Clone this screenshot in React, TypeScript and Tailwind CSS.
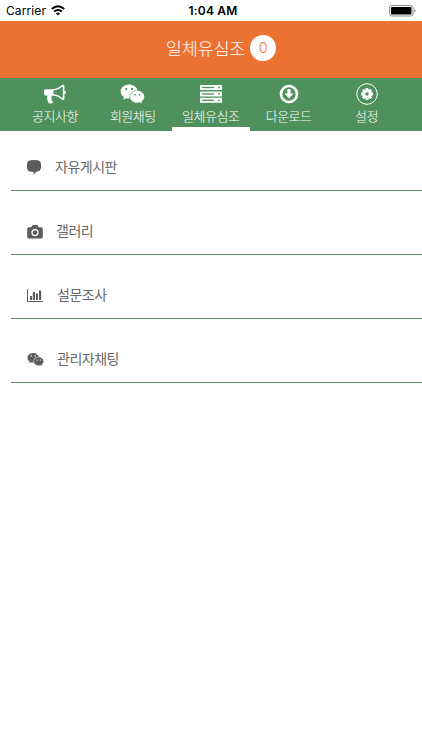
import type { ReactNode } from "react";
import { FaWeixin } from "react-icons/fa";

function MegaphoneIcon() {
  return (
    <svg viewBox="0 0 1792 1792" className="w-[22px] h-[22px]" fill="currentColor">
      <path d="M1664 640q53 0 90.5 37.5t37.5 90.5-37.5 90.5-90.5 37.5v384q0 52-38 90t-90 38q-417-347-812-380-58 19-91 66t-31 100.5 40 92.5q-20 33-23 65.5t6 58 33.5 55 48 50 61.5 50.5q-29 58-111.5 83t-168.5 11.5-132-55.5q-7-23-29.5-87.5t-32-94.5-23-89-15-101 3.5-98.5 22-110.5h-122q-66 0-113-47t-47-113v-192q0-66 47-113t113-47h480q435 0 896-384 52 0 90 38t38 90v384zm-128 604v-954q-394 302-768 343v270q377 42 768 341z" />
    </svg>
  );
}

function ServerIcon() {
  return (
    <svg viewBox="0 0 22 18" className="w-[22px] h-[18px]">
      {[0, 6.4, 12.8].map((y) => (
        <g key={y}>
          <rect x="0" y={y} width="22" height="5" rx="0.4" fill="white" />
          <rect x="2" y={y + 1.9} width="12" height="1.3" fill="#4f915c" />
          <circle cx="19" cy={y + 2.5} r="0.9" fill="#4f915c" />
        </g>
      ))}
    </svg>
  );
}

function DownloadIcon() {
  return (
    <svg viewBox="0 0 20 20" className="w-5 h-5">
      <circle cx="10" cy="10" r="8" fill="none" stroke="currentColor" strokeWidth="2.7" />
      <path d="M8.4 5h3.2v4.6h2.9L10 14.5 5.5 9.6h2.9z" fill="currentColor" />
    </svg>
  );
}

function SettingsIcon() {
  return (
    <svg viewBox="0 0 22 22" className="w-[22px] h-[22px]">
      <circle cx="11" cy="11" r="10.3" fill="none" stroke="currentColor" strokeWidth="1" />
      <circle cx="11" cy="11" r="3.3" fill="none" stroke="currentColor" strokeWidth="3" />
      {[0, 45, 90, 135, 180, 225, 270, 315].map((angle) => (
        <rect
          key={angle}
          x="9.6"
          y="5"
          width="2.8"
          height="2.5"
          rx="0.5"
          fill="currentColor"
          transform={`rotate(${angle} 11 11)`}
        />
      ))}
    </svg>
  );
}

function BubbleIcon() {
  return (
    <svg viewBox="0 0 14 15" className="w-[14px] h-[15px]" fill="currentColor">
      <path d="M3.5.3Q7-.1 10.5.3 13.6.8 13.9 3.5q.2 2.5 0 5-.4 2.400-3 2.900l-1.200.2L6.600 14.700V11.900q-1.600 0-3.400-.4Q.4 11 .1 8.500q-.2-2.500 0-5Q.4.800 3.500.300z" />
    </svg>
  );
}

function CameraIcon() {
  return (
    <svg viewBox="0 0 16 14" className="w-4 h-[14px]">
      <path
        d="M1.8 2.2h2.5L5.3.6Q5.6.1 6.2.1h3.6q.6 0 .9.5l1 1.6h2.500q1.600 0 1.600 1.600v8q0 1.600-1.600 1.600H1.800Q.2 13.400.2 11.800v-8q0-1.600 1.600-1.600z"
        fill="currentColor"
      />
      <circle cx="8" cy="7.6" r="3" fill="none" stroke="white" strokeWidth="1.3" />
    </svg>
  );
}

function ChartIcon() {
  return (
    <svg viewBox="0 0 16 13" className="w-4 h-[13px]" fill="currentColor">
      <path d="M0 0h1v12h15v1H0zM3 7h2v4H3zM5.800 3h2.200v8H5.800zM9 4.500h2V11H9zM12 1.500h2.200V11H12z" />
    </svg>
  );
}

function WifiIcon() {
  return (
    <svg viewBox="0 0 14 11" className="w-[14px] h-[11px]" fill="none" stroke="black" strokeWidth="2">
      <path d="M.8 4.1Q7-1.7 13.2 4.1M3.2 6.6q3.8-3.3 7.6 0" />
      <path d="M7 10.5 4.9 8.4q2.1-1.6 4.2 0z" fill="black" stroke="none" />
    </svg>
  );
}

function BatteryIcon() {
  return (
    <svg viewBox="0 0 27 12" className="w-[27px] h-3">
      <rect x="0.5" y="0.5" width="23.5" height="10.5" rx="2.3" fill="none" stroke="#8c8c8c" />
      <rect x="2" y="2" width="20.5" height="7.5" rx="0.8" fill="black" />
      <path d="M25.3 3.9q1.3.5 1.3 1.9t-1.3 1.9z" fill="#8c8c8c" />
    </svg>
  );
}

type Item = { label: string; icon: ReactNode };

const tabs: Item[] = [
  { label: "공지사항", icon: <MegaphoneIcon /> },
  { label: "회원채팅", icon: <FaWeixin className="w-[25px] h-[22px]" /> },
  { label: "일체유심조", icon: <ServerIcon /> },
  { label: "다운로드", icon: <DownloadIcon /> },
  { label: "설정", icon: <SettingsIcon /> },
];

const menus: (Item & { gap: string })[] = [
  { label: "자유게시판", icon: <BubbleIcon />, gap: "gap-[14px]" },
  { label: "갤러리", icon: <CameraIcon />, gap: "gap-[13px]" },
  { label: "설문조사", icon: <ChartIcon />, gap: "gap-[14px]" },
  { label: "관리자채팅", icon: <FaWeixin className="w-[17px] h-[15px]" />, gap: "gap-[13px]" },
];

export default function App() {
  return (
    <main className="h-[750px] w-full overflow-hidden bg-white font-['Noto_Sans_CJK_KR',sans-serif]">
      {/* Status bar */}
      <div className="grid h-[21px] grid-cols-3 items-center px-[6px] font-['Inter','Liberation_Sans',sans-serif] text-black">
        <div className="flex items-center gap-[5px] text-[12px] tracking-[0.1px]">
          <span>Carrier</span>
          <WifiIcon />
        </div>
        <span className="pl-1 text-center text-[12px] font-semibold tracking-[0.2px]">1:04 AM</span>
        <div className="flex justify-end">
          <BatteryIcon />
        </div>
      </div>

      {/* Header */}
      <header className="flex h-[57px] items-center justify-center gap-[5px] bg-[#ec7234] pb-[3px] pl-5 text-white">
        <h1 className="text-[17.5px] font-light tracking-[-0.2px]">일체유심조</h1>
        <span className="flex h-[26px] w-[26px] items-center justify-center rounded-full bg-white font-['Inter',sans-serif] text-[14.5px] font-light text-[#ec7234]">
          0
        </span>
      </header>

      {/* Tabs */}
      <nav className="flex h-[53px] bg-[#4f915c] pl-4 text-white">
        {tabs.map((tab) => (
          <div
            key={tab.label}
            className={`flex w-[77.9px] flex-col items-center border-b-4 pt-[5px] ${
              tab.label === "일체유심조" ? "border-white" : "border-transparent"
            }`}
          >
            <div className="flex h-[22px] items-center">{tab.icon}</div>
            <span className="mt-[1px] text-[13px] leading-5 font-light tracking-[-0.5px] whitespace-nowrap">
              {tab.label}
            </span>
          </div>
        ))}
      </nav>

      {/* Menu */}
      <ul className="pl-[11px] text-[#5c5c5c]">
        {menus.map((menu, i) => (
          <li
            key={menu.label}
            className={`flex items-center border-b border-[#589468] pl-4 ${menu.gap} ${
              i === 0 ? "h-[60px] pt-3" : "h-16 pt-4"
            }`}
          >
            <span className="pt-[2px]">{menu.icon}</span>
            <span className="pb-[2px] text-[14px] leading-5 tracking-[-0.5px] text-[#686868]">{menu.label}</span>
          </li>
        ))}
      </ul>
    </main>
  );
}
